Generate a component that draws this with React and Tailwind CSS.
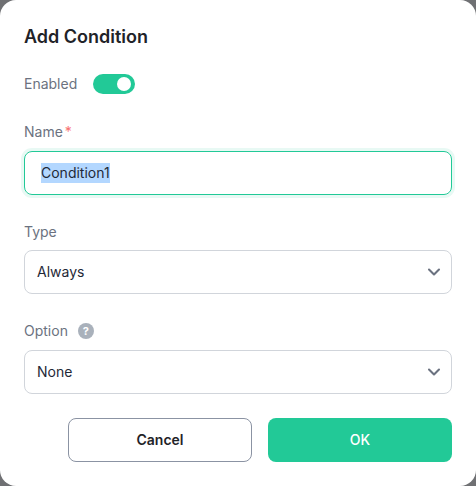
import React from 'react';
import { ChevronDown } from 'lucide-react';

function Select({ value }) {
  return (
    <div className="h-[44px] flex items-center justify-between rounded-lg border border-[#d1d5db] pl-[12px] pr-[7px] text-sm text-[#1f2937] bg-white">
      <span>{value}</span>
      <ChevronDown className="w-5 h-5 text-[#6b7280]" strokeWidth={2.5} />
    </div>
  );
}

export default function App() {
  return (
    <div className="w-[476px] h-[486px] bg-[#6f7073] font-['Inter',sans-serif] overflow-hidden">
      <div className="h-full bg-white rounded-2xl px-6 pt-[26px]">
        <h2 className="text-lg font-semibold text-[#1f2328] leading-[22px]">Add Condition</h2>

        {/* Enabled */}
        <div className="flex items-center gap-4 mt-[26px] h-5">
          <span className="text-sm text-[#6b7280]">Enabled</span>
          <div className="w-[42px] h-5 rounded-full bg-[#22c997] flex items-center justify-end pr-[4px]">
            <div className="w-[14px] h-[14px] rounded-full bg-white"></div>
          </div>
        </div>

        {/* Name */}
        <div className="mt-[28px] text-sm text-[#6b7280] leading-5">
          Name<span className="text-[#f87171] ml-0.5">*</span>
        </div>
        <div className="mt-[9px] h-[44px] flex items-center rounded-lg border border-[#22c997] ring-[3px] ring-[#22c997]/10 px-4 text-sm text-[#1f2937]">
          <span className="bg-[#b3d7ff]">Condition1</span>
        </div>

        {/* Type */}
        <div className="mt-[27px] mb-[8px] text-sm text-[#6b7280] leading-5">Type</div>
        <Select value="Always" />

        {/* Option */}
        <div className="mt-[27px] mb-[9px] flex items-center gap-[10px] text-sm text-[#6b7280] leading-5">
          Option
          <span className="w-4 h-4 rounded-full bg-[#a9b1bb] text-white text-[11px] font-bold flex items-center justify-center">?</span>
        </div>
        <Select value="None" />

        <div className="flex gap-4 mt-[24px] pl-[44px]">
          <button className="w-[184px] h-[44px] rounded-lg border border-[#8b93a3] text-sm font-semibold text-[#1f2328] bg-white">Cancel</button>
          <button className="w-[184px] h-[44px] rounded-lg bg-[#22c997] text-sm font-medium text-white">OK</button>
        </div>
      </div>
    </div>
  );
}
